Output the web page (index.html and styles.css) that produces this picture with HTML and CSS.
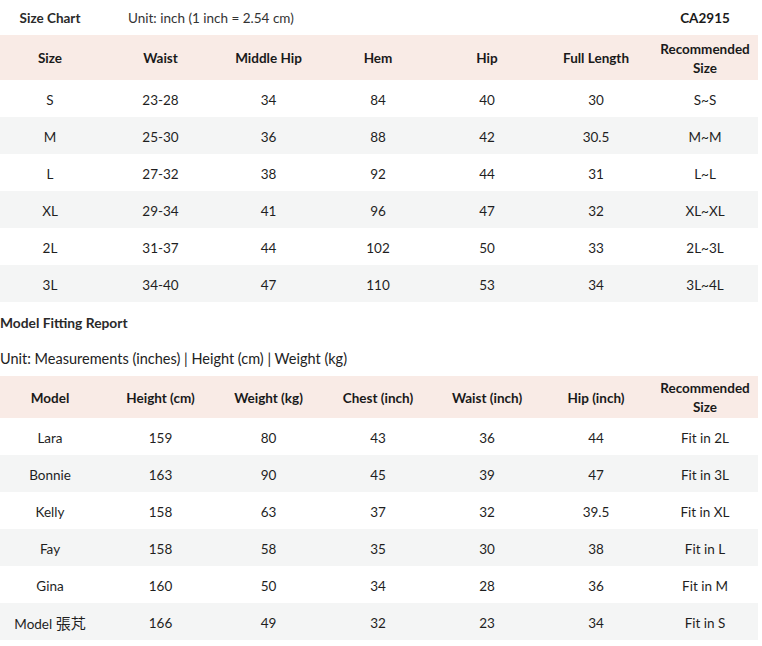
FILE: index.html
```html
<!DOCTYPE html>
<html>
<head>
<meta charset="utf-8">
<link rel="stylesheet" href="styles.css">
</head>
<body>
<div class="page">
  <div class="title-row">
    <div class="t-name">Size Chart</div>
    <div class="t-unit">Unit: inch (1 inch = 2.54 cm)</div>
    <div class="t-code">CA2915</div>
  </div>
  <table class="chart size-chart">
    <colgroup>
      <col class="c1"><col class="c2"><col class="c3"><col class="c4"><col class="c5"><col class="c6"><col class="c7">
    </colgroup>
    <thead>
      <tr class="head"><th>Size</th><th>Waist</th><th>Middle Hip</th><th>Hem</th><th>Hip</th><th>Full Length</th><th class="rec">Recommended<br>Size</th></tr>
    </thead>
    <tbody>
      <tr><td>S</td><td>23-28</td><td>34</td><td>84</td><td>40</td><td>30</td><td class="rec">S~S</td></tr>
      <tr><td>M</td><td>25-30</td><td>36</td><td>88</td><td>42</td><td>30.5</td><td class="rec">M~M</td></tr>
      <tr><td>L</td><td>27-32</td><td>38</td><td>92</td><td>44</td><td>31</td><td class="rec">L~L</td></tr>
      <tr><td>XL</td><td>29-34</td><td>41</td><td>96</td><td>47</td><td>32</td><td class="rec">XL~XL</td></tr>
      <tr><td>2L</td><td>31-37</td><td>44</td><td>102</td><td>50</td><td>33</td><td class="rec">2L~3L</td></tr>
      <tr><td>3L</td><td>34-40</td><td>47</td><td>110</td><td>53</td><td>34</td><td class="rec">3L~4L</td></tr>
    </tbody>
  </table>
  <div class="section-title">Model Fitting Report</div>
  <div class="section-unit">Unit: Measurements (inches) | Height (cm) | Weight (kg)</div>
  <table class="chart model-chart">
    <colgroup>
      <col class="c1"><col class="c2"><col class="c3"><col class="c4"><col class="c5"><col class="c6"><col class="c7">
    </colgroup>
    <thead>
      <tr class="head"><th>Model</th><th>Height (cm)</th><th>Weight (kg)</th><th>Chest (inch)</th><th>Waist (inch)</th><th>Hip (inch)</th><th class="rec">Recommended<br>Size</th></tr>
    </thead>
    <tbody>
      <tr><td>Lara</td><td>159</td><td>80</td><td>43</td><td>36</td><td>44</td><td class="rec">Fit in 2L</td></tr>
      <tr><td>Bonnie</td><td>163</td><td>90</td><td>45</td><td>39</td><td>47</td><td class="rec">Fit in 3L</td></tr>
      <tr><td>Kelly</td><td>158</td><td>63</td><td>37</td><td>32</td><td>39.5</td><td class="rec">Fit in XL</td></tr>
      <tr><td>Fay</td><td>158</td><td>58</td><td>35</td><td>30</td><td>38</td><td class="rec">Fit in L</td></tr>
      <tr><td>Gina</td><td>160</td><td>50</td><td>34</td><td>28</td><td>36</td><td class="rec">Fit in M</td></tr>
      <tr><td>Model <span class="cjk">張芃</span></td><td>166</td><td>49</td><td>32</td><td>23</td><td>34</td><td class="rec">Fit in S</td></tr>
    </tbody>
  </table>
</div>
</body>
</html>
```

FILE: styles.css
```css
* { box-sizing: border-box; }
html, body { margin: 0; padding: 0; background: #ffffff; }
body {
  font-family: "Lato", "Noto Sans CJK TC", sans-serif;
  font-size: 13.5px;
  color: #1f1f1f;
}
.page { width: 762px; }
.title-row {
  height: 35px;
  padding-top: 1px;
  display: grid;
  grid-template-columns: 100px 558px 100px;
  align-items: center;
}
.t-name { font-weight: 700; text-align: center; color: #2a2a2a; }
.t-unit { padding-left: 28px; color: #333; }
.t-code { font-weight: 700; text-align: center; padding-right: 6px; color: #1a1a1a; }

.chart {
  width: 758px;
  border-collapse: collapse;
  table-layout: fixed;
}
.c1 { width: 100px; }
.c2 { width: 121px; }
.c3 { width: 95px; }
.c4 { width: 124px; }
.c5 { width: 94px; }
.c6 { width: 124px; }
.c7 { width: 100px; }
.chart th, .chart td { padding: 2px 0 0; text-align: center; vertical-align: middle; }
.chart th { font-weight: 700; background: #f9ebe6; color: #1a1a1a; line-height: 19px; }
.chart .rec { padding-right: 6px; }
.size-chart .head { height: 45px; }
.model-chart .head { height: 42px; }
.chart td { height: 37px; }
.chart tbody tr:nth-child(even) td { background: #f4f5f5; }

.section-title {
  height: 38px;
  padding-top: 2px;
  display: flex;
  align-items: center;
  font-weight: 700;
  font-size: 13.8px;
  color: #2a2a2a;
}
.section-unit {
  height: 36px;
  padding-top: 1px;
  display: flex;
  align-items: center;
  font-size: 14.5px;
  color: #222;
}
.cjk { font-family: "Noto Sans CJK TC", sans-serif; font-size: 15px; }
```
